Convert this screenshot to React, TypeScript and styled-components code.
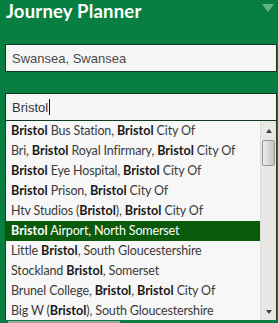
import React from 'react';
import styled, { createGlobalStyle } from 'styled-components';

const GlobalStyle = createGlobalStyle`
  html, body {
    margin: 0;
    padding: 0;
    background: #087f40;
    overflow: hidden;
  }
`;

const Panel = styled.div`
  width: 278px;
  height: 323px;
  background: #087f40;
  display: flex;
  flex-direction: column;
  box-sizing: border-box;
  padding: 0 1px 0 5px;
`;

const Header = styled.div`
  display: flex;
  align-items: center;
  justify-content: space-between;
  height: 22px;
  margin-left: 1px;
  padding-right: 3px;
`;

const Title = styled.h1`
  margin: 0;
  font-family: Lato, 'Open Sans', sans-serif;
  font-weight: 700;
  font-size: 18.5px;
  color: #ffffff;
  letter-spacing: 0.2px;
`;

const Toggle = styled.div`
  width: 0;
  height: 0;
  border-left: 6px solid transparent;
  border-right: 6px solid transparent;
  border-top: 8px solid #62b485;
  margin-top: -6px;
`;

const Field = styled.div<{ $top: number; $open?: boolean }>`
  margin-top: ${({ $top }) => $top}px;
  height: 28px;
  box-sizing: border-box;
  border: 1px solid #0d3a1d;
  background: #f6f6f6;
  display: flex;
  align-items: center;
  padding-left: 6px;
  font-family: 'Liberation Sans', Arial, sans-serif;
  font-size: 13px;
  color: ${({ $open }) => ($open ? '#333333' : '#4a4a4a')};
`;

const Caret = styled.span`
  display: inline-block;
  width: 1px;
  height: 16px;
  background: #111;
  margin-left: 1px;
`;

const List = styled.div`
  flex: 1;
  display: flex;
  border-left: 1px solid #1c3f26;
  border-right: 1px solid #1c3f26;
  background: #f7f7f7;
  min-height: 0;
`;

const Items = styled.ul`
  flex: 1;
  margin: 0;
  padding: 0;
  list-style: none;
`;

const Item = styled.li<{ $active?: boolean }>`
  height: 20px;
  line-height: 19px;
  padding-left: 5px;
  font-family: Lato, 'Open Sans', sans-serif;
  font-size: 12.5px;
  letter-spacing: -0.15px;
  white-space: nowrap;
  color: ${({ $active }) => ($active ? '#ffffff' : '#3a3a3a')};
  background: ${({ $active }) => ($active ? '#0a5b0c' : 'transparent')};

  b {
    font-weight: 700;
    font-size: 12.6px;
    letter-spacing: 0;
    color: ${({ $active }) => ($active ? '#ffffff' : '#1a1a1a')};
  }
`;

const Scrollbar = styled.div`
  width: 15px;
  background: #e9e7e5;
  border-left: 1px solid #dcdad8;
  display: flex;
  flex-direction: column;
  align-items: center;
`;

const Arrow = styled.div<{ $down?: boolean }>`
  width: 0;
  height: 0;
  margin: ${({ $down }) => ($down ? 'auto 0 6px' : '8px 0 0')};
  border-left: 3.5px solid transparent;
  border-right: 3.5px solid transparent;
  ${({ $down }) => ($down ? 'border-top: 4px solid #404040;' : 'border-bottom: 4px solid #404040;')}
`;

const Thumb = styled.div`
  width: 13px;
  height: 26px;
  margin-top: 7px;
  box-sizing: border-box;
  border: 1px solid #9a9a9a;
  border-radius: 2px;
  background: linear-gradient(to right, #ececec, #d4d4d4 60%, #c4c4c4);
`;

const Footer = styled.div`
  height: 3px;
  display: flex;
  align-items: flex-end;
`;

const FooterBar = styled.div`
  width: 112px;
  height: 2px;
  margin-left: 3px;
  background: #9fa59f;
`;

const results: React.ReactNode[] = [
  <><b>Bristol</b> Bus Station, <b>Bristol</b> City Of</>,
  <>Bri, <b>Bristol</b> Royal Infirmary, <b>Bristol</b> City Of</>,
  <><b>Bristol</b> Eye Hospital, <b>Bristol</b> City Of</>,
  <><b>Bristol</b> Prison, <b>Bristol</b> City Of</>,
  <>Htv Studios (<b>Bristol</b>), <b>Bristol</b> City Of</>,
  <><b>Bristol</b> Airport, North Somerset</>,
  <>Little <b>Bristol</b>, South Gloucestershire</>,
  <>Stockland <b>Bristol</b>, Somerset</>,
  <>Brunel College, <b>Bristol</b>, <b>Bristol</b> City Of</>,
  <>Big W (<b>Bristol</b>), South Gloucestershire</>,
];

const App: React.FC = () => {
  return (
    <>
      <GlobalStyle />
      <Panel>
        <Header>
          <Title>Journey Planner</Title>
          <Toggle />
        </Header>
        <Field $top={22}>Swansea, Swansea</Field>
        <Field $top={21} $open>
          Bristol<Caret />
        </Field>
        <List>
          <Items>
            {results.map((r, i) => (
              <Item key={i} $active={i === 5}>
                {r}
              </Item>
            ))}
          </Items>
          <Scrollbar>
            <Arrow />
            <Thumb />
            <Arrow $down />
          </Scrollbar>
        </List>
        <Footer>
          <FooterBar />
        </Footer>
      </Panel>
    </>
  );
};

export default App;
